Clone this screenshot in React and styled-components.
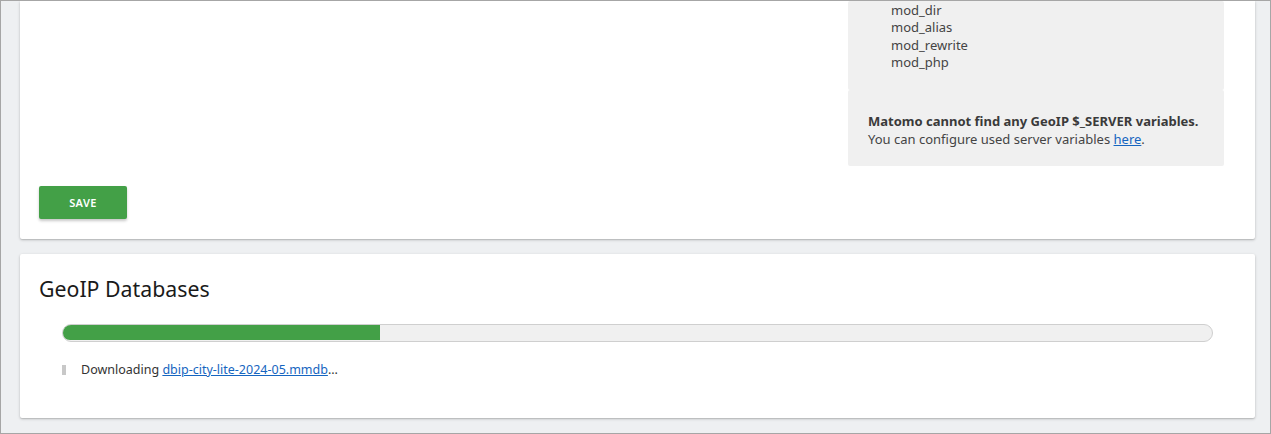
import React from "react";
import styled, { createGlobalStyle } from "styled-components";

const GlobalStyle = createGlobalStyle`
  html, body { margin: 0; padding: 0; }
  body {
    font-family: "Noto Sans", "Open Sans", Arial, sans-serif;
    background: #eef0f2;
  }
`;

const Frame = styled.div`
  box-sizing: border-box;
  width: 1271px;
  height: 434px;
  border: 1px solid #a6a6a6;
  background: #eef0f2;
  overflow: hidden;
  padding: 0 15px 0 19px;
  display: flex;
  flex-direction: column;
  gap: 15px;
`;

const Card = styled.section`
  background: #fff;
  border-radius: ${(p) => (p.$cut ? "0 0 2px 2px" : "2px")};
  box-shadow: 0 1px 3px rgba(0, 0, 0, 0.22), 0 1px 1px rgba(0, 0, 0, 0.08);
  padding: ${(p) => (p.$cut ? "0 20px 20px 19px" : "20px 19px 39px")};
`;

const FieldRow = styled.div`
  display: flex;
  justify-content: flex-end;
`;

const HelpColumn = styled.div`
  width: 376px;
  margin-right: 11px;
  display: flex;
  flex-direction: column;
  color: #444;
  font-size: 13px;
  line-height: 18px;
`;

const HelpBox = styled.div`
  background: #f0f0f0;
  border-radius: 2px;
  padding: ${(p) => p.$pad};
`;

const ModList = styled.ul`
  list-style: none;
  margin: 0;
  padding: 0 0 0 23px;
  line-height: 17.6px;
`;

const Strong = styled.div`
  font-weight: 700;
  color: #3a3a3a;
`;

const Link = styled.a`
  color: #1565c0;
  text-decoration: underline;
`;

const SaveButton = styled.button`
  margin-top: 20px;
  width: 88px;
  height: 33px;
  border: none;
  border-radius: 2px;
  background: #43a047;
  color: #fff;
  font-family: inherit;
  font-size: 11px;
  font-weight: 600;
  letter-spacing: 0.4px;
  box-shadow: 0 2px 3px rgba(0, 0, 0, 0.22);
  cursor: pointer;
`;

const Heading = styled.h2`
  margin: 0;
  font-size: 21.3px;
  font-weight: 400;
  line-height: 30px;
  color: #1a1a1a;
`;

const Progress = styled.div`
  margin: 20px 23px 0;
  height: 18px;
  box-sizing: border-box;
  border: 1px solid #cfcfcf;
  border-radius: 9px;
  background: #f0f0f0;
  overflow: hidden;
  display: flex;
`;

const ProgressFill = styled.div`
  background: #43a047;
  height: 100%;
  margin: -1px 0 -1px -1px;
  border-radius: 9px 0 0 9px;
`;

const Status = styled.div`
  margin: 19px 0 0 23px;
  display: flex;
  align-items: center;
  gap: 15px;
  font-size: 12.5px;
  line-height: 18px;
  color: #333;
`;

const Marker = styled.span`
  width: 4px;
  height: 10px;
  background: #c8c8c8;
`;

export default function App() {
  return (
    <>
      <GlobalStyle />
      <Frame>
        <Card $cut>
          <FieldRow>
            <HelpColumn>
              <HelpBox $pad="0.5px 20px 18px">
                <ModList>
                  <li>mod_dir</li>
                  <li>mod_alias</li>
                  <li>mod_rewrite</li>
                  <li>mod_php</li>
                </ModList>
              </HelpBox>
              <HelpBox $pad="22px 20px 18px">
                <Strong>Matomo cannot find any GeoIP $_SERVER variables.</Strong>
                <div>
                  You can configure used server variables <Link href="#">here</Link>.
                </div>
              </HelpBox>
            </HelpColumn>
          </FieldRow>
          <SaveButton>SAVE</SaveButton>
        </Card>
        <Card>
          <Heading>GeoIP Databases</Heading>
          <Progress>
            <ProgressFill style={{ width: "27.7%" }} />
          </Progress>
          <Status>
            <Marker />
            <span>
              Downloading <Link href="#">dbip-city-lite-2024-05.mmdb</Link>...
            </span>
          </Status>
        </Card>
      </Frame>
    </>
  );
}
